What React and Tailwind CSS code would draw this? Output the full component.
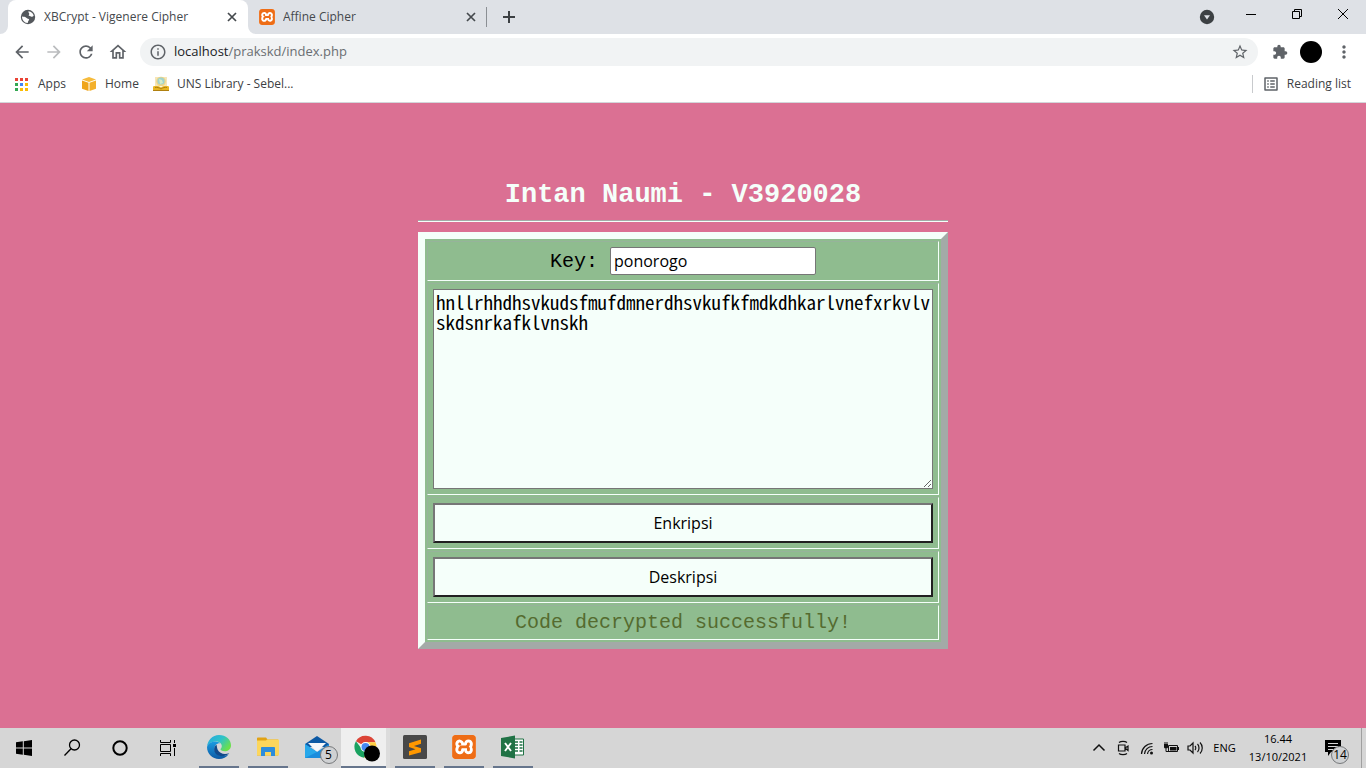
import {
  MdArrowBack,
  MdArrowForward,
  MdExtension,
  MdInfoOutline,
  MdMoreVert,
  MdOutlineHome,
  MdOutlineListAlt,
  MdRefresh,
  MdStarBorder,
} from "react-icons/md";
import { SiXampp } from "react-icons/si";

const uiFont = "font-['Open_Sans','Noto_Sans',sans-serif]";

function CloseIcon() {
  return (
    <svg viewBox="0 0 16 16" className="size-4" fill="none" stroke="#45494d" strokeWidth="1.700">
      <path d="M4 4l8 8M12 4l-8 8" />
    </svg>
  );
}

function GlobeIcon() {
  return (
    <svg viewBox="0 0 16 16" className="size-4">
      <circle cx="8" cy="8" r="7.200" fill="#54585c" />
      <path d="M8.500 2.200c2.700.2 4.700 2 5.200 4.600-.8.900-2 1.100-2.800.6-.6-.5-1.600-.5-2.300-1 .2-1 1-1.200.6-2-.3-.7-1-.9-.7-2.200z" fill="#fff" />
      <path d="M2 7.500c1.500.2 3.500.3 4.600 1.400.8.800 2.200.5 2.500 1.600.2 1-1 1.200-1 2 0 .7-.2 1.200-.7 1.500C4.400 13.700 2 11.200 2 7.500z" fill="#fff" />
    </svg>
  );
}

function XamppIcon({ className }) {
  return (
    <span className={`flex items-center justify-center overflow-hidden rounded-[3px] bg-white text-[#ee6d16] ${className}`}>
      <SiXampp className="size-full" />
    </span>
  );
}

function TabStrip() {
  return (
    <div className="flex h-[34px] items-stretch bg-[#dee1e6] pl-2">
      <div className="relative flex w-60 items-center rounded-t-lg bg-white pl-3 pr-2">
        <svg viewBox="0 0 8 8" className="absolute bottom-0 -left-2 size-2" fill="#fff">
          <path d="M8 0v8H0a8 8 0 0 0 8-8z" />
        </svg>
        <svg viewBox="0 0 8 8" className="absolute bottom-0 -right-2 size-2" fill="#fff">
          <path d="M0 0v8h8a8 8 0 0 1-8-8z" />
        </svg>
        <GlobeIcon />
        <span className="ml-2 flex-1 truncate text-[12px] text-[#45494d]">XBCrypt - Vigenere Cipher</span>
        <button type="button" aria-label="Close XBCrypt tab">
          <CloseIcon />
        </button>
      </div>
      <div className="flex w-[238px] items-center pl-[11px] pr-[7px]">
        <XamppIcon className="size-4" />
        <span className="ml-2 flex-1 truncate text-[12px] text-[#45494d]">Affine Cipher</span>
        <button type="button" aria-label="Close Affine Cipher tab">
          <CloseIcon />
        </button>
      </div>
      <div className="my-[7px] w-px bg-[#8b8f94]" />
      <button type="button" aria-label="New tab" className="ml-3 flex items-center">
        <svg viewBox="0 0 20 20" className="size-5" stroke="#3c4043" strokeWidth="2">
          <path d="M10 4v12M4 10h12" />
        </svg>
      </button>
      <div className="flex-1" />
      <button type="button" aria-label="Search tabs" className="mr-[13px] flex items-center">
        <svg viewBox="0 0 16 16" className="size-4">
          <circle cx="8" cy="8" r="7.200" fill="#3c4043" />
          <path d="M5 6.200h6L8 10.500z" fill="#dee1e6" />
        </svg>
      </button>
      <div className="flex h-7 items-stretch">
        <button type="button" aria-label="Minimize" className="flex w-[46px] items-center justify-center">
          <svg viewBox="0 0 10 10" className="size-[10px]" stroke="#000">
            <path d="M0 5.500h10" />
          </svg>
        </button>
        <button type="button" aria-label="Restore" className="flex w-[46px] items-center justify-center">
          <svg viewBox="0 0 10 10" className="size-[10px]" fill="none" stroke="#000">
            <path d="M.5 2.500h7v7h-7zM2.500 2.500v-2h7v7h-2" />
          </svg>
        </button>
        <button type="button" aria-label="Close" className="flex w-[46px] items-center justify-center">
          <svg viewBox="0 0 10 10" className="size-[10px]" stroke="#000">
            <path d="M0 0l10 10M10 0L0 10" />
          </svg>
        </button>
      </div>
    </div>
  );
}

function Toolbar() {
  return (
    <div className="flex h-9 items-center pl-3 pr-3 text-[#5f6368]">
      <div className="flex gap-3">
        <button type="button" aria-label="Back">
          <MdArrowBack className="size-5" />
        </button>
        <button type="button" aria-label="Forward" className="text-[#babcbe]">
          <MdArrowForward className="size-5" />
        </button>
        <button type="button" aria-label="Reload">
          <MdRefresh className="size-5" />
        </button>
        <button type="button" aria-label="Home">
          <MdOutlineHome className="size-5" />
        </button>
      </div>
      <div className="ml-3 flex h-7 flex-1 items-center rounded-full bg-[#f1f3f4] px-[9px]">
        <MdInfoOutline className="size-[18px]" />
        <a href="#page" className="ml-[7px] flex-1 text-[13px] text-[#6a6e72]">
          <span className="text-[#202124]">localhost</span>/prakskd/index.php
        </a>
        <button type="button" aria-label="Bookmark this tab">
          <MdStarBorder className="size-[18px]" />
        </button>
      </div>
      <button type="button" aria-label="Extensions" className="ml-[14px]">
        <MdExtension className="size-4" />
      </button>
      <button type="button" aria-label="Profile" className="ml-3 size-[22px] rounded-full bg-black" />
      <button type="button" aria-label="Menu" className="ml-3">
        <MdMoreVert className="size-5" />
      </button>
    </div>
  );
}

function AppsGridIcon() {
  const colors = ["#ea4335", "#ea4335", "#ea4335", "#34a853", "#4285f4", "#fbbc04", "#34a853", "#fbbc04", "#fbbc04"];
  return (
    <svg viewBox="0 0 13 13" className="size-[13px]">
      {colors.map((c, i) => (
        <rect key={i} x={(i % 3) * 5} y={Math.floor(i / 3) * 5} width="3" height="3" fill={c} />
      ))}
    </svg>
  );
}

function Bookmarks() {
  return (
    <div className="flex h-[33px] items-center border-b border-[#d3d6da] pr-[15px] pb-1 pl-[15px] text-[12px] text-[#3c4043]">
      <a href="#apps" className="flex items-center gap-[10px]">
        <AppsGridIcon />
        Apps
      </a>
      <a href="#home" className="ml-[15px] flex items-center gap-2">
        <svg viewBox="0 0 16 16" className="size-4">
          <path d="M1 3.400L8 1l7 2.400L8 6z" fill="#f6bb3c" />
          <path d="M1 4.400l6.500 2.300V15L1 12.800z" fill="#efa51c" />
          <path d="M15 4.400L8.500 6.700V15l6.500-2.200z" fill="#f3b02c" />
        </svg>
        Home
      </a>
      <a href="#library" className="ml-[14px] flex items-center gap-2">
        <svg viewBox="0 0 16 16" className="size-4">
          <path d="M2 1h12v9H2z" fill="#f6e6b8" />
          <circle cx="8" cy="5.500" r="4.800" fill="#f0d585" />
          <circle cx="8" cy="5" r="3.600" fill="#9fd3cf" />
          <path d="M6 3l3 1 1 3-3 1z" fill="#d6ebc9" />
          <path d="M0 10.500c3-.8 6-.5 8 1 2-1.500 5-1.800 8-1V15H0z" fill="#e8b622" />
          <path d="M2 11.500c2-.3 4 0 6 1.500 2-1.500 4-1.800 6-1.500M0 14.500h16" fill="none" stroke="#a9790f" strokeWidth=".9" />
        </svg>
        UNS Library - Sebel...
      </a>
      <div className="ml-auto flex items-center gap-[7px] border-l border-[#c8cacd] pl-[9px]">
        <MdOutlineListAlt className="size-[18px] text-[#5f6368]" />
        <a href="#reading-list">Reading list</a>
      </div>
    </div>
  );
}

const cell =
  "flex justify-center border border-t-[#96b39a] border-l-[#96b39a] border-r-[#f5fffa] border-b-[#f5fffa] p-[5px]";
const actionButton =
  "h-10 w-full border-2 border-t-[#767676] border-l-[#767676] border-r-[#212121] border-b-[#212121] bg-[#f5fffa] text-[16px] text-black";

function CipherPage() {
  return (
    <main id="page" className="flex flex-1 flex-col items-center bg-[#db7093] px-4 pt-[76px] pb-16 font-['Liberation_Mono',monospace]">
      <form className="w-full max-w-[530px]" onSubmit={(e) => e.preventDefault()}>
        <h1 className="text-center text-[27px] leading-[32px] font-bold text-[#f5fffa]">Intan Naumi - V3920028</h1>
        <hr className="mt-[9px] mb-[10px] border-t border-b border-t-[#a3aaa7] border-b-[#f5fffa]" />
        <div className="flex flex-col gap-0.5 border-7 border-t-[#f5fffa] border-l-[#f5fffa] border-r-[#a3aaa7] border-b-[#a3aaa7] bg-[#8fbc8f] p-0.5 text-[20px] leading-[23px] text-black">
          <div className={`${cell} items-center gap-3`}>
            <label htmlFor="key">Key:</label>
            <input
              id="key"
              defaultValue="ponorogo"
              className="h-7 w-[206px] rounded-[2px] border border-[#767676] bg-white px-[3px] font-['Open_Sans',sans-serif] text-[16px]"
            />
          </div>
          <div className={cell}>
            <textarea
              aria-label="Text"
              spellCheck={false}
              defaultValue="hnllrhhdhsvkudsfmufdmnerdhsvkufkfmdkdhkarlvnefxrkvlvskdsnrkafklvnskh"
              className="h-[200px] w-full border border-[#767676] bg-[#f5fffa] py-0.5 pl-0.5 font-['Noto_Sans_Mono_CJK_SC','DejaVu_Sans_Mono',monospace] text-[19px] leading-5 break-all"
            />
          </div>
          <div className={cell}>
            <button type="submit" className={`${actionButton} font-['Open_Sans',sans-serif]`}>
              Enkripsi
            </button>
          </div>
          <div className={cell}>
            <button type="submit" className={`${actionButton} font-['Open_Sans',sans-serif]`}>
              Deskripsi
            </button>
          </div>
          <div className={`${cell} text-[#556b2f]`} role="status">
            Code decrypted successfully!
          </div>
        </div>
      </form>
    </main>
  );
}

function Badge({ className, children }) {
  return (
    <span
      className={`absolute flex size-[18px] items-center justify-center rounded-full border border-[#77797b] bg-[#cfd1d3] text-[12px] leading-none text-black ${className}`}
    >
      {children}
    </span>
  );
}

function TaskButton({ label, open, active, children }) {
  return (
    <button
      type="button"
      aria-label={label}
      className={`flex h-10 w-[49px] flex-col items-center ${active ? "border-r-4 border-[#dcdcdc] bg-[#efefef]" : ""}`}
    >
      <span className="flex flex-1 items-center justify-center">{children}</span>
      <span className={`h-0.5 ${active ? "w-full" : "w-10"} ${open ? "bg-[#66758c]" : ""}`} />
    </button>
  );
}

function EdgeIcon() {
  return (
    <svg viewBox="0 0 24 24" className="size-6">
      <defs>
        <linearGradient id="edgeTop" x1="0" y1="0" x2="1" y2=".6">
          <stop offset="0" stopColor="#25a6e0" />
          <stop offset=".55" stopColor="#2fc2c9" />
          <stop offset="1" stopColor="#6be04b" />
        </linearGradient>
        <linearGradient id="edgeBody" x1="0" y1="0" x2="0" y2="1">
          <stop offset="0" stopColor="#1b9de2" />
          <stop offset="1" stopColor="#0c59a4" />
        </linearGradient>
      </defs>
      <path d="M0 12C.5 5 5.500 0 12 0c7 0 12 4.700 12 10.200 0 4-3.100 6-6.300 6-2.700 0-4.200-.9-4.200-1.900 0-.8 1.300-1.200 1.300-3.300 0-2.500-2.600-4.600-6-4.600C4.500 6.400 1 8.500 0 12z" fill="url(#edgeTop)" />
      <path d="M0 12c.8-3.300 3.700-5.600 8.200-5.600 2 0 3.800.7 5 1.900-3.300-.3-5.700 2.200-5.700 5.500 0 4.500 4.200 7.500 8.700 7.200 2-.1 4.300-1 5.600-2-2.300 3.300-5.800 5-9.800 5C5.400 24 0 18.700 0 12z" fill="url(#edgeBody)" />
      <path d="M9.500 9.700c-3.500 2.300-3 8.200 1.300 10.500 4.500 2.400 9.200.2 11.500-2.300-4.500 2.300-9.800.6-11.600-3.200-.9-1.900-.7-3.600-1.200-5z" fill="#114a8b" />
    </svg>
  );
}

function FolderIcon() {
  return (
    <svg viewBox="0 0 22 20" className="h-5 w-[22px]">
      <path d="M0 1.500C0 .7.5.5 1 .5h8l1.500 2H21v16H0z" fill="#e1a214" />
      <path d="M0 3.500h9l1-1h12v16H0z" fill="#fcd65c" />
      <path d="M4 11c0-.6.500-1 1-1h12c.6 0 1 .5 1 1v8h-4v-4H8v4H4z" fill="#2d8ddc" />
    </svg>
  );
}

function MailIcon() {
  return (
    <span className="relative">
      <svg viewBox="0 0 24 24" className="size-6">
        <path d="M0 9L12 1l12 8v3H0z" fill="#0c59a4" />
        <path d="M3 8h18l-9 9z" fill="#f5f7fa" />
        <path d="M0 9l12 8 12-8v14H0z" fill="#1b8ddd" />
        <path d="M0 9l12 8-12 6z" fill="#27a8ea" />
      </svg>
      <Badge className="-right-[9px] -bottom-[5px]">5</Badge>
    </span>
  );
}

function ChromeIcon() {
  return (
    <svg viewBox="-3 -1 26 26" className="size-[26px] overflow-visible">
      <path d="M11.500 11.500L1.900 6.200A11 11 0 0 1 21.500 7.300H12z" fill="#dc4437" />
      <path d="M1.900 6.200A11 11 0 0 0 10 22.700l5-7-6.500-1z" fill="#1aa260" />
      <path d="M21.500 7.300A11 11 0 0 1 10 22.700l5.500-9L12 7.300z" fill="#ffce44" />
      <circle cx="11.500" cy="12" r="5" fill="#fff" />
      <circle cx="11.500" cy="12" r="4" fill="#4688f1" />
      <circle cx="18" cy="18.500" r="8" fill="#000" />
    </svg>
  );
}

function SublimeIcon() {
  return (
    <svg viewBox="0 0 24 24" className="size-6">
      <rect width="24" height="24" rx="1.500" fill="#484848" />
      <path d="M18 4.500v4.200l-7 2.300 7 2.300v3.900L6 20.500v-4.200l6.500-2.100L6 12V8.300z" fill="#ff9800" />
    </svg>
  );
}

function ExcelIcon() {
  return (
    <svg viewBox="0 0 24 24" className="size-6">
      <path d="M12 4h10.500v16H12z" fill="#fff" stroke="#207245" />
      <path d="M14 7h3M18.500 7h3M14 10h3M18.500 10h3M14 13h3M18.500 13h3M14 16h3M18.500 16h3" stroke="#207245" strokeWidth="1.500" />
      <path d="M0 3l14-2.500v23L0 21z" fill="#207245" />
      <path d="M4 8l6 8M10 8l-6 8" stroke="#fff" strokeWidth="1.900" />
    </svg>
  );
}

function SystemButton({ label, children }) {
  return (
    <button type="button" aria-label={label} className="flex w-12 items-center justify-center">
      <svg viewBox="0 0 18 18" className="size-[18px] overflow-visible" fill="none" stroke="#000">
        {children}
      </svg>
    </button>
  );
}

function TrayButton({ label, children }) {
  return (
    <button type="button" aria-label={label} className="flex w-6 items-center justify-center">
      <svg viewBox="0 0 16 16" className="size-4" fill="none" stroke="#111" strokeWidth="1.200">
        {children}
      </svg>
    </button>
  );
}

function Taskbar() {
  return (
    <footer className="flex h-10 bg-[#d6d6d6] text-[11px] text-black">
      <SystemButton label="Start">
        <path d="M1 3.300l6.800-1v6.200H1zM8.800 2.200L17 1v7.500H8.800zM1 9.500h6.800v6.200l-6.800-1zM8.800 9.500H17V17l-8.200-1.200z" fill="#000" stroke="none" />
      </SystemButton>
      <SystemButton label="Search">
        <circle cx="11.500" cy="6" r="5" strokeWidth="1.300" />
        <path d="M8 9.700L1.500 16.500" strokeWidth="1.300" />
      </SystemButton>
      <SystemButton label="Cortana">
        <circle cx="9" cy="9" r="6.700" strokeWidth="2" />
      </SystemButton>
      <SystemButton label="Task view">
        <path d="M1.500 1v2.500h10V1M1.500 17v-2.500h10V17M1.500 5.500h10v7h-10zM15.500 1v3M15.500 9v8" />
        <path d="M14 5h3v3h-3z" fill="#000" stroke="none" />
      </SystemButton>
      <div className="ml-0.5 flex">
        <TaskButton label="Edge" open>
          <EdgeIcon />
        </TaskButton>
        <TaskButton label="File Explorer" open>
          <FolderIcon />
        </TaskButton>
        <TaskButton label="Mail">
          <MailIcon />
        </TaskButton>
        <TaskButton label="Chrome" open active>
          <ChromeIcon />
        </TaskButton>
        <TaskButton label="Sublime Text" open>
          <SublimeIcon />
        </TaskButton>
        <TaskButton label="XAMPP" open>
          <XamppIcon className="size-6" />
        </TaskButton>
        <TaskButton label="Excel" open>
          <ExcelIcon />
        </TaskButton>
      </div>
      <div className="ml-auto flex items-stretch">
        <TrayButton label="Show hidden icons">
          <path d="M2.500 10.500L8 5l5.500 5.500" strokeWidth="1.500" />
        </TrayButton>
        <TrayButton label="Meet now">
          <path d="M4 2.500c2-1.500 6-1.500 8 0M4 13.500c2 1.500 6 1.500 8 0M3.500 5h6.500v6H3.500zM10 8l3-2v4.500z" />
        </TrayButton>
        <TrayButton label="Network">
          <path d="M2.500 14A11 11 0 0 1 13.500 3.500M5.500 14a8 8 0 0 1 8-7.500M8.500 14a5 5 0 0 1 5-4.500" />
          <circle cx="12.500" cy="13" r="1.500" fill="#111" stroke="none" />
        </TrayButton>
        <TrayButton label="Battery">
          <path d="M5.500 5.500h9v6h-9zM15.500 7v3" strokeWidth="1" />
          <path d="M7 7h6.500v3.500H7zM1 4h4v3.500l-1 1H2l-1-1z" fill="#111" stroke="none" />
          <path d="M2 2v2M4 2v2M3 8.500v3h3" strokeWidth="1" />
        </TrayButton>
        <TrayButton label="Volume">
          <path d="M1 6h2l3-3v10l-3-3H1zM8 6c1 1 1 3 0 4M10.500 4c2 2 2 6 0 8M13 2.500c3 3 3 8 0 11" />
        </TrayButton>
        <button type="button" className="w-[35px]">
          ENG
        </button>
        <button type="button" className="w-[72px] text-center leading-[18px]">
          16.44
          <br />
          13/10/2021
        </button>
        <button type="button" aria-label="Notifications" className="flex w-[47px] items-center pl-[11px]">
          <span className="relative">
            <svg viewBox="0 0 16 16" className="size-4">
              <path d="M0 0h16v12H6l-3 4v-4H0z" fill="#000" />
              <path d="M3 3.500h10M3 6.500h10M3 9.500h6" stroke="#d6d6d6" />
            </svg>
            <Badge className="-right-2 -bottom-2">14</Badge>
          </span>
        </button>
        <div className="w-[5px] border-l border-[#a0a0a0]" />
      </div>
    </footer>
  );
}

export default function App() {
  return (
    <div className={`flex min-h-screen flex-col bg-white ${uiFont}`}>
      <header>
        <TabStrip />
        <Toolbar />
        <Bookmarks />
      </header>
      <CipherPage />
      <Taskbar />
    </div>
  );
}
